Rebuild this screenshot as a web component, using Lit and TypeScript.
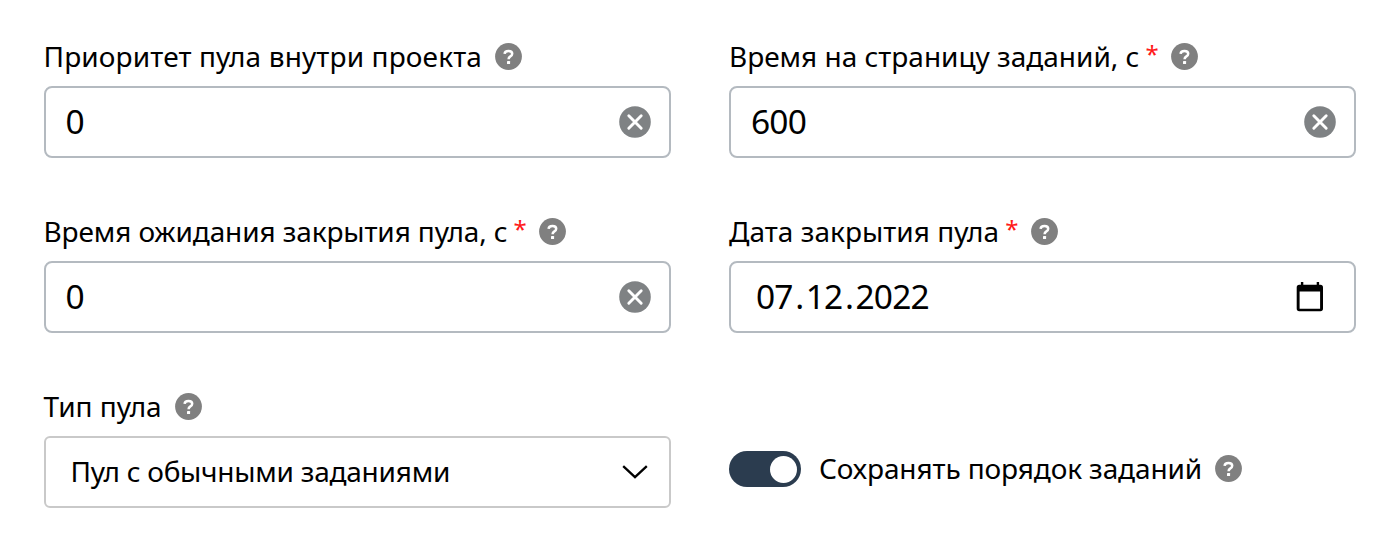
import { LitElement, html, css, svg, nothing } from "lit";
import { customElement, property } from "lit/decorators.js";
import { styleMap } from "lit/directives/style-map.js";

@customElement("help-icon")
class HelpIcon extends LitElement {
  static styles = css`
    :host { display: block; flex: none; width: 27px; height: 27px; }
    .icon { display: block; }
  `;
  render() {
    return html`<svg class="icon" width="27" height="27" viewBox="0 0 27 27">
      <circle cx="13.5" cy="13.5" r="13.4" fill="#808080" />
      <path d="M9.6 10.9C9.7 8.7 11.3 7.9 13.5 7.9C15.8 7.9 17.2 9 17.2 10.7C17.2 12.3 16.3 12.9 15.1 13.6C14 14.3 13.6 14.8 13.6 16.3" fill="none" stroke="#fff" stroke-width="2.5" />
      <rect x="12" y="18" width="3.1" height="3" rx=".6" fill="#fff" />
    </svg>`;
  }
}

@customElement("field-label")
class FieldLabel extends LitElement {
  @property() text = "";
  @property({ type: Number }) tracking = 0;
  @property({ type: Boolean }) required = false;
  static styles = css`
    :host { display: flex; align-items: center; height: 36px; font-size: 28px; line-height: 36px; white-space: nowrap; }
    .star { color: #ff1a1a; margin-left: 6px; width: 13px; text-align: center; font-size: 24px; padding-bottom: 5px; }
    .help { margin-left: 13px; margin-top: 1.5px; }
  `;
  render() {
    return html`<span class="text" style=${styleMap({ letterSpacing: `${this.tracking}px` })}>${this.text}</span>
      ${this.required ? html`<span class="star">*</span>` : nothing}
      <help-icon class="help"></help-icon>`;
  }
}

const clearIcon = svg`<svg width="32" height="32" viewBox="0 0 32 32">
  <circle cx="16" cy="16" r="15.8" fill="#7f8284"/>
  <path d="M9.8 9.8L22.2 22.2M22.2 9.8L9.8 22.2" stroke="#fff" stroke-width="2.9" stroke-linecap="round"/>
</svg>`;

const calendarIcon = svg`<svg width="28" height="30" viewBox="0 0 28 30">
  <path fill-rule="evenodd" d="M4.9 0H7.3V2.8H20.7V0H23.1V2.8H24.4Q27 2.8 27 5.4V26.6Q27 29.2 24.4 29.2H3.3Q.7 29.2 .7 26.6V5.4Q.7 2.8 3.3 2.8H4.9ZM3.6 9.4V26.7H24.1V9.4Z"/>
</svg>`;

const chevronIcon = svg`<svg width="26" height="14" viewBox="0 0 26 14">
  <path d="M1.2 1.2L13 12.2L24.8 1.2" fill="none" stroke="#000" stroke-width="2.3"/>
</svg>`;

@customElement("app-root")
class AppRoot extends LitElement {
  static styles = css`
    :host { display: block; height: 549px; box-sizing: border-box; background: #fff; color: #000; font-family: "Noto Sans", "Open Sans", sans-serif; padding: 38px 43.5px 0; }
    .form { display: grid; grid-template-columns: 627px 627px; column-gap: 58.5px; grid-auto-rows: 120px; row-gap: 55px; }
    .field { display: flex; flex-direction: column; gap: 12px; }
    .box { display: flex; align-items: center; justify-content: space-between; box-sizing: border-box; height: 72px; border: 2px solid #b4bac0; border-radius: 8px; padding: 0 18px 0 20px; font-size: 33.5px; letter-spacing: -.8px; line-height: 40px; white-space: nowrap; }
    .box svg { display: block; flex: none; }
    .value { padding-bottom: 2px; }
    .date { padding: 0 30px 0 25px; }
    .date svg { margin-bottom: 1px; }
    .date-value { display: flex; }
    .dot { width: 13px; text-align: center; }
    .select { border-color: #c9c9c9; border-radius: 6px; padding: 0 21px 0 25px; font-size: 28px; letter-spacing: -.24px; }
    .switch-row { display: flex; align-items: center; gap: 18px; height: 36px; margin-top: 63px; }
    .switch { display: flex; justify-content: flex-end; align-items: center; box-sizing: border-box; width: 72px; height: 36px; padding-right: 4.5px; border-radius: 18px; background: #2b3c4f; }
    .knob { width: 27px; height: 27px; border-radius: 50%; background: #fff; }
    .switch-label { height: 34px; margin-bottom: 2px; }
  `;
  render() {
    return html`<div class="form">
      <div class="field">
        <field-label text="Приоритет пула внутри проекта" tracking=".13"></field-label>
        <div class="box"><span class="value">0</span>${clearIcon}</div>
      </div>
      <div class="field">
        <field-label text="Время на страницу заданий, с" tracking="-.01" required></field-label>
        <div class="box"><span class="value">600</span>${clearIcon}</div>
      </div>
      <div class="field">
        <field-label text="Время ожидания закрытия пула, с" tracking="-.115" required></field-label>
        <div class="box"><span class="value">0</span>${clearIcon}</div>
      </div>
      <div class="field">
        <field-label text="Дата закрытия пула" tracking=".03" required></field-label>
        <div class="box date"><span class="value date-value"><span>07</span><span class="dot">.</span><span>12</span><span class="dot">.</span><span>2022</span></span>${calendarIcon}</div>
      </div>
      <div class="field">
        <field-label text="Тип пула"></field-label>
        <div class="box select"><span class="value">Пул с обычными заданиями</span>${chevronIcon}</div>
      </div>
      <div class="switch-row">
        <div class="switch" role="switch" aria-checked="true"><div class="knob"></div></div>
        <field-label class="switch-label" text="Сохранять порядок заданий" tracking="-.11"></field-label>
      </div>
    </div>`;
  }
}
